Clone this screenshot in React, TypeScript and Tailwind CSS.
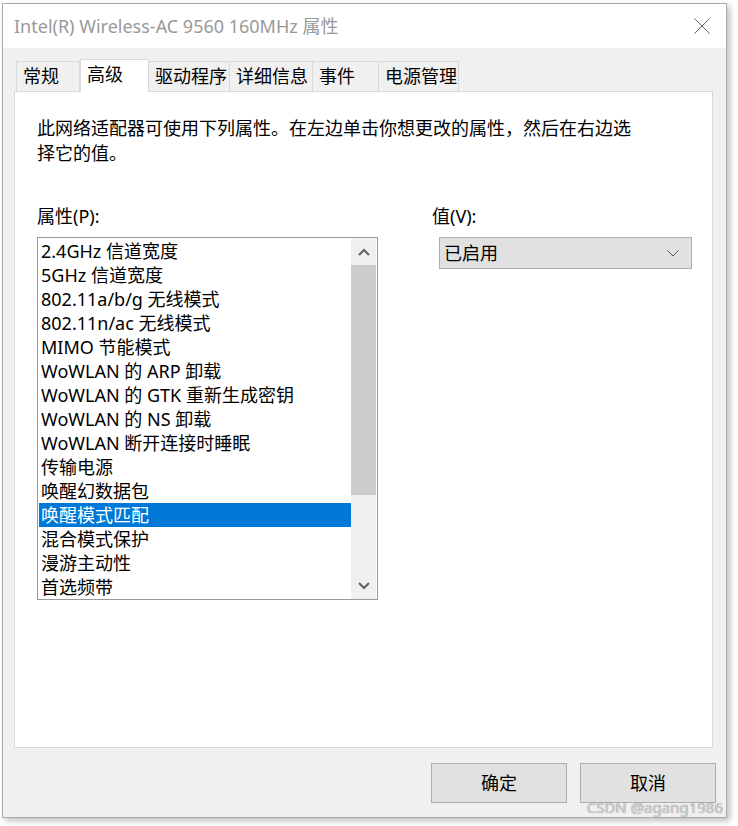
import React from "react";

const font = { fontFamily: '"Noto Sans", "Noto Sans CJK SC", sans-serif' };

const tabs = ["常规", "高级", "驱动程序", "详细信息", "事件", "电源管理"];
const tabWidths = ["w-[64px]", "w-[69px]", "w-[82px]", "w-[84px]", "w-[67px]", "w-[81px]"];

const items = [
  "2.4GHz 信道宽度",
  "5GHz 信道宽度",
  "802.11a/b/g 无线模式",
  "802.11n/ac 无线模式",
  "MIMO 节能模式",
  "WoWLAN 的 ARP 卸载",
  "WoWLAN 的 GTK 重新生成密钥",
  "WoWLAN 的 NS 卸载",
  "WoWLAN 断开连接时睡眠",
  "传输电源",
  "唤醒幻数据包",
  "唤醒模式匹配",
  "混合模式保护",
  "漫游主动性",
  "首选频带",
];

export default function App() {
  return (
    <div className="w-[738px] h-[826px] bg-white pt-[3px] pl-[2px]" style={font}>
      <div className="relative w-[725px] h-[815px] border border-[#aaaaaa] bg-[#f0f0f0] flex flex-col shadow-[3px_3px_6px_rgba(0,0,0,0.25)]">
        {/* Title bar */}
        <div className="h-[44px] bg-white flex items-center justify-between pl-[11px] pr-[16px] shrink-0">
          <span className="text-[18px] text-[#999999] leading-none">Intel(R) Wireless-AC 9560 160MHz 属性</span>
          <svg width="16" height="16" viewBox="0 0 16 16">
            <path d="M0.5 0.5 L15.5 15.5 M15.5 0.5 L0.5 15.5" stroke="#666" strokeWidth="1" />
          </svg>
        </div>

        {/* Tabs */}
        <div className="flex items-end pl-[13px] h-[43px] shrink-0">
          {tabs.map((t, i) =>
            i === 1 ? (
              <div
                key={t}
                className={`${tabWidths[i]} h-[33px] bg-white border border-[#d9d9d9] border-b-0 -mb-[1px] relative z-10 flex items-start pt-[1px] pl-[6px] text-[18px] text-black`}
              >
                {t}
              </div>
            ) : (
              <div
                key={t}
                className={`${tabWidths[i]} h-[30px] bg-[#f0f0f0] border border-[#d9d9d9] border-b-0 ${i > 1 ? "-ml-[1px]" : ""} flex items-center pl-[6px] text-[18px] text-black`}
              >
                {t}
              </div>
            )
          )}
        </div>

        {/* Panel */}
        <div className="ml-[11px] w-[699px] h-[657px] bg-white border border-[#d9d9d9] shrink-0 pl-[22px] pt-[24px]">
          <p className="text-[18px] leading-[25px] text-black w-[610px]">
            此网络适配器可使用下列属性。在左边单击你想更改的属性，然后在右边选择它的值。
          </p>
          <div className="flex mt-[40px]">
            <div className="w-[341px]">
              <div className="text-[18px] leading-[20px] text-black">属性(P):</div>
              <div className="mt-[11px] w-[341px] h-[363px] border border-[#999999] flex">
                <div className="flex-1 pt-[1px] pl-[1px]">
                  {items.map((it, i) => (
                    <div
                      key={it}
                      className={`h-[24px] leading-[24px] pl-[2px] text-[18px] whitespace-nowrap ${
                        i === 11 ? "bg-[#0078d7] text-white" : "text-black"
                      }`}
                    >
                      {it}
                    </div>
                  ))}
                </div>
                <div className="w-[25px] bg-[#f0f0f0] flex flex-col mr-[1px]">
                  <div className="h-[27px] flex items-center justify-center">
                    <svg width="12" height="8" viewBox="0 0 12 8">
                      <path d="M1 7 L6 2 L11 7" fill="none" stroke="#606060" strokeWidth="2" />
                    </svg>
                  </div>
                  <div className="h-[230px] bg-[#cdcdcd]" />
                  <div className="flex-1" />
                  <div className="h-[27px] flex items-center justify-center">
                    <svg width="12" height="8" viewBox="0 0 12 8">
                      <path d="M1 1 L6 6 L11 1" fill="none" stroke="#606060" strokeWidth="2" />
                    </svg>
                  </div>
                </div>
              </div>
            </div>
            <div className="ml-[54px]">
              <div className="text-[18px] leading-[20px] text-black">值(V):</div>
              <div className="mt-[11px] ml-[7px] w-[253px] h-[32px] bg-[#e1e1e1] border border-[#adadad] flex items-center justify-between pl-[4px] pr-[12px]">
                <span className="text-[18px] text-black">已启用</span>
                <svg width="12" height="7" viewBox="0 0 12 7">
                  <path d="M0.5 0.5 L6 6 L11.5 0.5" fill="none" stroke="#555" strokeWidth="1" />
                </svg>
              </div>
            </div>
          </div>
        </div>

        {/* Buttons */}
        <div className="flex justify-end gap-[13px] pr-[10px] mt-[15px]">
          <button className="w-[136px] h-[40px] bg-[#e1e1e1] border border-[#adadad] text-[18px] text-black">确定</button>
          <button className="w-[136px] h-[40px] bg-[#e1e1e1] border border-[#adadad] text-[18px] text-black">取消</button>
        </div>

        <div className="absolute right-[3px] bottom-[0px] text-[15px] leading-[20px] text-[#d0d0d0] [text-shadow:0_0_1px_#777]">
          CSDN @agang1986
        </div>
      </div>
    </div>
  );
}
